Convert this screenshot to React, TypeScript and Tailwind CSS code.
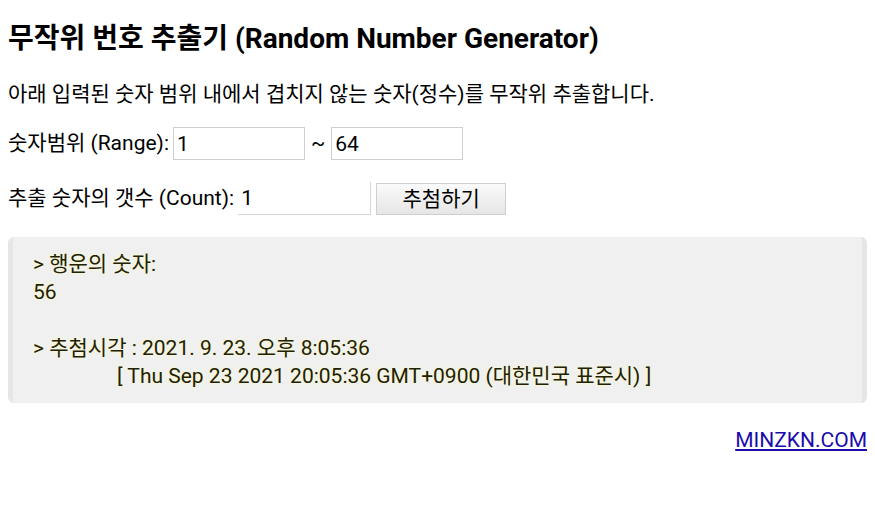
import React, { useState } from 'react';

const font = { fontFamily: 'Roboto, "Noto Sans CJK KR", sans-serif' };

export default function App() {
  const [min, setMin] = useState('1');
  const [max, setMax] = useState('64');
  const [count, setCount] = useState('1');

  return (
    <div className="min-h-screen bg-white px-2 text-[21px] text-black" style={font}>
      <h1 className="pt-[22px] text-[28px] font-bold leading-[34px]">
        무작위 번호 추출기 (Random Number Generator)
      </h1>
      <p className="mt-[24px] leading-[28px]">
        아래 입력된 숫자 범위 내에서 겹치지 않는 숫자(정수)를 무작위 추출합니다.
      </p>

      <div className="mt-[19px] flex items-center">
        <span>숫자범위 (Range):</span>
        <input
          value={min}
          onChange={(e) => setMin(e.target.value)}
          className="ml-1 h-[33px] w-[132px] border border-[#cfcfcf] px-[3px] text-[21px] outline-none"
        />
        <span className="mx-[6px]">~</span>
        <input
          value={max}
          onChange={(e) => setMax(e.target.value)}
          className="h-[33px] w-[132px] border border-[#cfcfcf] px-[3px] text-[21px] outline-none"
        />
      </div>

      <div className="mt-[22px] flex items-center">
        <span>추출 숫자의 갯수 (Count):</span>
        <input
          value={count}
          onChange={(e) => setCount(e.target.value)}
          className="ml-1 h-[33px] w-[133px] border-b border-r border-[#d6d6d6] px-[3px] text-[21px] outline-none"
        />
        <button className="ml-[5px] h-[32px] w-[130px] border border-[#cfcfcf] bg-gradient-to-b from-[#fafafa] to-[#e6e6e6] text-[21px]">
          추첨하기
        </button>
      </div>

      <div className="mt-[22px] rounded-[6px] border-x-[5px] border-[#e6e6e6] bg-[#f0f0f0] pb-[13px] pl-[20px] pt-[13px] leading-[28px] text-[#222200] [text-shadow:0_0_4px_#fffbc8]">
        <div>&gt; 행운의 숫자:</div>
        <div>56</div>
        <div>&nbsp;</div>
        <div>&gt; 추첨시각 : 2021. 9. 23. 오후 8:05:36</div>
        <div className="pl-[84px]">[ Thu Sep 23 2021 20:05:36 GMT+0900 (대한민국 표준시) ]</div>
      </div>

      <div className="mt-[22px] text-right">
        <a href="#" className="text-[#1a0dab] underline">
          MINZKN.COM
        </a>
      </div>
    </div>
  );
}
